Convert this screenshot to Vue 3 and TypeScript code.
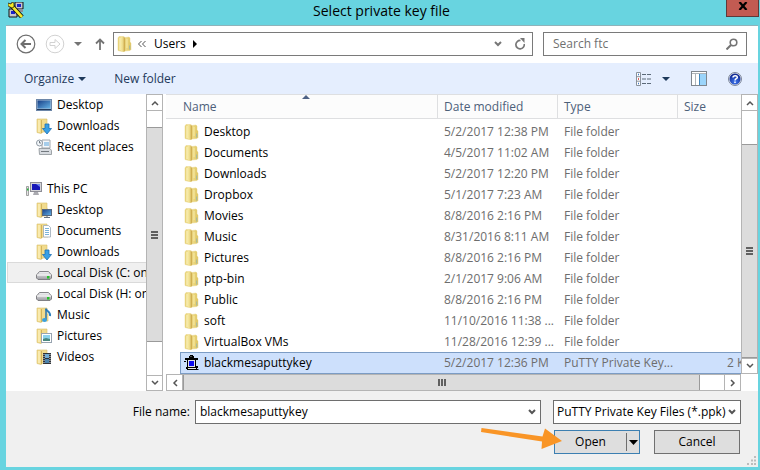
<script setup lang="ts">
import { ref } from 'vue'

interface NavItem {
  label: string
  icon: string
  root?: boolean
  spaced?: boolean
}

interface Entry {
  name: string
  modified: string
  type: string
  size: string
  icon: string
}

const places: NavItem[] = [
  { label: 'Desktop', icon: 'screen' },
  { label: 'Downloads', icon: 'downloads' },
  { label: 'Recent places', icon: 'recent' },
  { label: 'This PC', icon: 'pc', root: true, spaced: true },
  { label: 'Desktop', icon: 'desktop' },
  { label: 'Documents', icon: 'documents' },
  { label: 'Downloads', icon: 'downloads' },
  { label: 'Local Disk (C: on', icon: 'disk' },
  { label: 'Local Disk (H: on', icon: 'disk' },
  { label: 'Music', icon: 'music' },
  { label: 'Pictures', icon: 'pictures' },
  { label: 'Videos', icon: 'videos' },
  { label: '', icon: 'network', root: true, spaced: true },
]

const folder = (name: string, modified: string): Entry => ({
  name,
  modified,
  type: 'File folder',
  size: '',
  icon: 'folder',
})

const entries: Entry[] = [
  folder('Desktop', '5/2/2017 12:38 PM'),
  folder('Documents', '4/5/2017 11:02 AM'),
  folder('Downloads', '5/2/2017 12:20 PM'),
  folder('Dropbox', '5/1/2017 7:23 AM'),
  folder('Movies', '8/8/2016 2:16 PM'),
  folder('Music', '8/31/2016 8:11 AM'),
  folder('Pictures', '8/8/2016 2:16 PM'),
  folder('ptp-bin', '2/1/2017 9:06 AM'),
  folder('Public', '8/8/2016 2:16 PM'),
  folder('soft', '11/10/2016 11:38 ...'),
  folder('VirtualBox VMs', '11/28/2016 12:39 ...'),
  { name: 'blackmesaputtykey', modified: '5/2/2017 12:36 PM', type: 'PuTTY Private Key...', size: '2 KB', icon: 'key' },
]

const currentPlace = ref(7)
const selected = ref(11)
const fileName = ref('blackmesaputtykey')
const search = ref('')

function pick(index: number) {
  selected.value = index
  fileName.value = entries[index].name
}
</script>

<template>
  <svg class="defs" width="0" height="0" aria-hidden="true">
    <defs>
      <linearGradient id="fold" x1="0" y1="0" x2="1" y2="0">
        <stop offset="0" stop-color="#e6cf70" />
        <stop offset=".3" stop-color="#f5e79c" />
        <stop offset=".5" stop-color="#d2b254" />
        <stop offset=".6" stop-color="#efdc88" />
        <stop offset="1" stop-color="#dcc25c" />
      </linearGradient>
      <linearGradient id="blue" x1="0" y1="0" x2="1" y2="1">
        <stop offset="0" stop-color="#183f86" />
        <stop offset="1" stop-color="#66b4e8" />
      </linearGradient>
      <linearGradient id="metal" x1="0" y1="0" x2="0" y2="1">
        <stop offset="0" stop-color="#f4f4f6" />
        <stop offset="1" stop-color="#9c9ca2" />
      </linearGradient>
      <radialGradient id="ball" cx=".5" cy=".75" r=".7">
        <stop offset="0" stop-color="#3f78f0" />
        <stop offset="1" stop-color="#10268e" />
      </radialGradient>
      <symbol id="folder" viewBox="0 0 16 16">
        <path d="M1 2l1-1.500h4.500L8 1.500l4-.5 1 1v4l1 1v6.500L13 14.500l-5 .5-1 1-2-.5-4-1z" fill="url(#fold)" stroke="#e8d588" stroke-width=".5" />
        <path d="M7.500 2v13" stroke="#cfae50" stroke-width=".8" />
        <path d="M3 2v12" stroke="#fbf3c4" />
        <path d="M10 3v9" stroke="#f7eaa6" />
        <path d="M12.700 9.500v4" stroke="#9db8a8" />
      </symbol>
      <symbol id="halffolder" viewBox="0 0 16 16">
        <path d="M1 1h10v6h1v7H7l-2 1.500-4-1z" fill="#f1db8d" stroke="#d9bf68" stroke-width=".6" />
        <path d="M5.500 2v13" stroke="#c9a94f" stroke-width=".8" />
        <path d="M3 2v12" stroke="#fbefba" stroke-width="1.500" />
      </symbol>
      <symbol id="screen" viewBox="0 0 16 16">
        <rect x=".5" y="2.500" width="15" height="11" fill="#a8bdd4" stroke="#6c86a8" />
        <rect x="1.500" y="3.500" width="13" height="8" fill="url(#blue)" />
        <path d="M1 12.500h14" stroke="#223a5c" />
      </symbol>
      <symbol id="downloads" viewBox="0 0 16 16">
        <use href="#halffolder" />
        <path d="M9 6h4v4.500h2.500L11 16 6.500 10.500H9z" fill="#38a0e6" stroke="#1d70b4" stroke-width=".8" />
      </symbol>
      <symbol id="recent" viewBox="0 0 16 16">
        <path d="M6 1h8v8H6z" fill="#f6f8fa" stroke="#a2a8ae" />
        <path d="M8 4h5M8 6h5" stroke="#56a3dc" />
        <path d="M3 9.500h11l1.500 2v4H3.500z" fill="#d7dbe0" stroke="#8a9096" stroke-width=".8" />
        <path d="M5 12.500h8" stroke="#73797f" />
        <circle cx="3.500" cy="4" r="3" fill="#f3f7fa" stroke="#8f99a3" />
        <path d="M3.500 2v2H5" fill="none" stroke="#55606a" stroke-width=".8" />
      </symbol>
      <symbol id="pc" viewBox="0 0 16 16">
        <rect x="4.500" y="1.500" width="11" height="9" fill="#d4d4d8" stroke="#8e8e96" />
        <rect x="6" y="3" width="8" height="6" fill="#1717b8" />
        <path d="M10 3h4v3z" fill="#6f84f0" />
        <path d="M8 11h4l1 3H7z" fill="#aaaab0" />
        <path d="M.5 5.500h2v9h-2z" fill="#e5e5e5" stroke="#8b8b8b" stroke-width=".8" />
        <path d="M1 8.500h1.500" stroke="#25b33a" stroke-width="2" />
      </symbol>
      <symbol id="desktop" viewBox="0 0 16 16">
        <use href="#halffolder" />
        <rect x="6.500" y="7.500" width="9" height="6" fill="url(#blue)" stroke="#56677d" />
        <path d="M8 15.500h6M11 14v1" stroke="#65717f" />
      </symbol>
      <symbol id="documents" viewBox="0 0 16 16">
        <use href="#halffolder" />
        <path d="M7.500 2.500h5l2 2v9.500h-7z" fill="#fff" stroke="#9aa8b6" stroke-width=".8" />
        <path d="M9 5.500h4M9 7.500h4M9 9.500h4M9 11.500h4" stroke="#6babd6" stroke-width=".9" />
      </symbol>
      <symbol id="disk" viewBox="0 0 16 16">
        <path d="M3.500 6.500h9l3 3.500v3l-1.500 1.500H2L.5 13v-3z" fill="url(#metal)" stroke="#77777c" stroke-width=".9" />
        <path d="M1 10h14" stroke="#fff" />
        <rect x="11" y="11" width="2.500" height="2.500" fill="#26c12a" />
      </symbol>
      <symbol id="music" viewBox="0 0 16 16">
        <use href="#halffolder" />
        <path d="M10 1.500c0 3 5 3 4 7.500" fill="none" stroke="#2f80bd" stroke-width="2" />
        <path d="M10 2v11" stroke="#2673b2" stroke-width="1.500" />
        <ellipse cx="8.500" cy="13" rx="2.500" ry="2" fill="#39a0dd" />
      </symbol>
      <symbol id="pictures" viewBox="0 0 16 16">
        <use href="#halffolder" />
        <rect x="5.500" y="5.500" width="10" height="9" fill="#fff" stroke="#98a4b0" />
        <rect x="7" y="7" width="7" height="6" fill="#8bd2ed" />
        <path d="M7 11l3-1 4 1v2H7z" fill="#4a897f" />
      </symbol>
      <symbol id="videos" viewBox="0 0 16 16">
        <use href="#halffolder" />
        <rect x="7" y="4" width="8" height="11" fill="#2f3338" />
        <rect x="9" y="5" width="4" height="4" fill="#70abd4" />
        <rect x="9" y="10" width="4" height="4" fill="#4b82ac" />
        <path d="M8 5v10M14 5v10" stroke="#e3e6e8" stroke-dasharray="1 1" />
      </symbol>
      <symbol id="network" viewBox="0 0 16 16">
        <path d="M4 .500h4" stroke="#3c6c9c" />
        <path d="M3 1.500h6" stroke="#5c8cb4" />
        <rect x="5" y="5" width="9" height="7" fill="#3d70b0" />
      </symbol>
      <symbol id="key" viewBox="0 0 16 16">
        <path d="M6 0h3v1h1v2h4v2h-2v6h2v2h-1v2H3v-1H2v-2h1V5H1V3h4V1h1z" fill="#000" />
        <path d="M4 5h7v7H4z" fill="#e2e2e8" />
        <path d="M5 6h5v5H5z" fill="#0b0bf0" />
        <path d="M4 13.500h8" stroke="#e8e8e8" />
        <path d="M6.500 1.500h1" stroke="#9a9a9a" />
        <path d="M0 6.500h2M12.500 14.500h2" stroke="#000" />
      </symbol>
      <symbol id="chevron" viewBox="0 0 8 8">
        <path d="M1 2l3 3 3-3" fill="none" stroke="currentColor" stroke-width="2" />
      </symbol>
      <symbol id="thin" viewBox="0 0 8 8">
        <path d="M1 2l3 3 3-3" fill="none" stroke="currentColor" stroke-width="1.500" />
      </symbol>
    </defs>
  </svg>

  <main class="dialog">
    <header class="titlebar">
      <svg class="app" viewBox="0 0 16 16" width="16" height="16" aria-hidden="true">
        <path d="M7 0h8v7H7zM1 7h8v8H1z" fill="#c6c6ce" stroke="#111" />
        <path d="M9 2h4v3H9zM3 9h4v3H3z" fill="#1a22c8" />
        <path d="M9 7h6v3H9zM1 1h4v5H1z" fill="#8f8f98" />
        <path d="M3 3l11 12" stroke="#111" stroke-width="4.500" />
        <path d="M3 3l11 12" stroke="#f5ea28" stroke-width="2.600" />
        <path d="M0 1l3 1 1-2 2 1v4L4 6 0 4z" fill="#f5ea28" stroke="#111" stroke-width=".7" />
      </svg>
      <h1>Select private key file</h1>
      <button class="close" type="button" aria-label="Close">
        <svg viewBox="0 0 10 8" width="10" height="8"><path d="M1.500 0l7 8M8.500 0l-7 8" stroke="#000" stroke-width="2.200" /></svg>
      </button>
    </header>

    <section class="body">
      <nav class="address" aria-label="Address">
        <div class="history">
          <button type="button" aria-label="Back">
            <svg viewBox="0 0 20 20" width="20" height="20" fill="none" stroke="#6e6e6e">
              <circle cx="10" cy="10" r="8.800" stroke-width="1.200" />
              <path d="M15 10H6M9.500 6L5.500 10l4 4" stroke-width="2" />
            </svg>
          </button>
          <button type="button" aria-label="Forward">
            <svg viewBox="0 0 20 20" width="20" height="20" fill="none" stroke="#d2d2d2">
              <circle cx="10" cy="10" r="8.800" />
              <path d="M5 8.500h5V5.500l5 4.500-5 4.500v-3H5z" />
            </svg>
          </button>
          <button type="button" aria-label="Recent locations">
            <svg viewBox="0 0 8 4" width="8" height="4"><path d="M0 0h8L4 4z" fill="#747474" /></svg>
          </button>
          <button class="up" type="button" aria-label="Up">
            <svg viewBox="0 0 10 12" width="10" height="12"><path d="M5 12V2M1 5.500l4-4 4 4" fill="none" stroke="#747474" stroke-width="1.800" /></svg>
          </button>
        </div>
        <div class="path">
          <svg class="icon" width="16" height="16" aria-hidden="true"><use href="#folder" /></svg>
          <button class="more" type="button" aria-label="More folders">
            <svg viewBox="0 0 8 6" width="8" height="6"><path d="M3.500 0l-3 3 3 3M7.500 0l-3 3 3 3" fill="none" stroke="#555" /></svg>
          </button>
          <button class="crumb" type="button">Users</button>
          <button class="crumb-arrow" type="button" aria-label="Subfolders of Users">
            <svg viewBox="0 0 4 8" width="4" height="8"><path d="M0 0v8l4-4z" fill="#000" /></svg>
          </button>
          <button class="drop" type="button" aria-label="Previous locations">
            <svg width="8" height="8"><use href="#chevron" /></svg>
          </button>
          <button class="refresh" type="button" aria-label="Refresh">
            <svg viewBox="0 0 12 12" width="12" height="12"><path d="M10.200 6A4.200 4.200 0 1 1 6.500 2.500" fill="none" stroke="#777" stroke-width="1.700" /><path d="M6 0h4.500v5z" fill="#777" /></svg>
          </button>
        </div>
        <label class="search">
          <input v-model="search" type="text" placeholder="Search ftc" aria-label="Search ftc" />
          <svg viewBox="0 0 12 12" width="12" height="12" fill="none" stroke="#747474"><circle cx="7.500" cy="4.500" r="3.300" stroke-width="1.600" /><path d="M5 7l-4.500 4.500" stroke-width="2" /></svg>
        </label>
      </nav>

      <div class="toolbar">
        <button type="button">Organize <svg viewBox="0 0 8 4" width="8" height="4"><path d="M0 0h8L4 4z" fill="#1e395b" /></svg></button>
        <button type="button">New folder</button>
        <div class="tools">
          <button type="button" aria-label="Change view">
            <svg viewBox="0 0 16 14" width="16" height="14">
              <path d="M.5.5h4v13h-4zM0 4.700h5M0 9.200h5" fill="#fff" stroke="#8a929c" />
              <path d="M2 2.500h1M2 11.500h1" stroke="#3d79c8" stroke-width="1.500" /><path d="M2 7h1" stroke="#d12626" stroke-width="1.500" />
              <path d="M6 2.500h4M11 2.500h4M6 7h4M11 7h4M6 11.500h4M11 11.500h4" stroke="#5c6a79" />
            </svg>
          </button>
          <button type="button" aria-label="View options"><svg viewBox="0 0 8 4" width="8" height="4"><path d="M0 0h8L4 4z" fill="#1e395b" /></svg></button>
          <button class="pane" type="button" aria-label="Preview pane">
            <svg viewBox="0 0 16 15" width="16" height="15">
              <rect x=".5" y=".5" width="15" height="14" fill="#fff" stroke="#7f868e" />
              <path d="M1 2.500h14M4.500 3v11" stroke="#adb3b9" /><rect x="9" y="3" width="6" height="11" fill="#9bd4fa" /><path d="M8.500 3v11" stroke="#3e86bd" />
            </svg>
          </button>
          <button class="help" type="button" aria-label="Help">
            <svg viewBox="0 0 14 14" width="14" height="14">
              <circle cx="7" cy="7" r="6.500" fill="#dfe5f0" stroke="#7c8699" /><circle cx="7" cy="7" r="5.500" fill="url(#ball)" />
              <path d="M5 5.500C5 3 9.500 3 9.300 5.500 9.200 6.800 7.200 6.700 7 8.500M7 9.500V11" fill="none" stroke="#fff" stroke-width="1.500" />
            </svg>
          </button>
        </div>
      </div>

      <div class="browser">
        <aside class="sidebar">
          <ul>
            <li v-for="(place, i) in places" :key="i" :class="{ spaced: place.spaced }">
              <button type="button" :class="{ root: place.root, current: i === currentPlace }" @click="currentPlace = i">
                <svg class="icon" width="16" height="16" aria-hidden="true"><use :href="`#${place.icon}`" /></svg>
                <span>{{ place.label }}</span>
              </button>
            </li>
          </ul>
          <div class="vscroll">
            <button type="button" aria-label="Scroll up"><svg class="flip" width="8" height="8"><use href="#thin" /></svg></button>
            <div class="track">
              <div class="thumb side"><i></i><i></i><i></i></div>
            </div>
            <button type="button" aria-label="Scroll down"><svg width="8" height="8"><use href="#thin" /></svg></button>
          </div>
        </aside>

        <div class="files">
          <div class="listing">
            <div class="view">
              <table>
                <colgroup>
                  <col class="c-gutter" /><col /><col class="c-mid" /><col class="c-mid" /><col class="c-size" />
                </colgroup>
                <thead>
                  <tr>
                    <th colspan="2" class="name-head">
                      Name
                      <svg class="sort" viewBox="0 0 8 4" width="8" height="4" aria-hidden="true"><path d="M0 4h8L4 0z" fill="#4d6185" /></svg>
                    </th>
                    <th>Date modified</th>
                    <th>Type</th>
                    <th>Size</th>
                  </tr>
                </thead>
                <tbody>
                  <tr v-for="(entry, i) in entries" :key="entry.name" :class="{ selected: i === selected }" @click="pick(i)">
                    <td class="gutter"></td>
                    <td class="name">
                      <div><svg class="icon" width="16" height="16" aria-hidden="true"><use :href="`#${entry.icon}`" /></svg>{{ entry.name }}</div>
                    </td>
                    <td>{{ entry.modified }}</td>
                    <td>{{ entry.type }}</td>
                    <td class="size">{{ entry.size }}</td>
                  </tr>
                </tbody>
              </table>
            </div>
            <div class="vscroll">
              <button type="button" aria-label="Scroll up"><svg class="flip" width="8" height="8"><use href="#thin" /></svg></button>
              <div class="track">
                <div class="thumb list"><i></i><i></i><i></i></div>
              </div>
              <button type="button" aria-label="Scroll down"><svg width="8" height="8"><use href="#thin" /></svg></button>
            </div>
          </div>
          <div class="hscroll">
            <button type="button" aria-label="Scroll left"><svg class="left" width="8" height="8"><use href="#thin" /></svg></button>
            <div class="track">
              <div class="thumb"><i></i><i></i><i></i></div>
            </div>
            <button type="button" aria-label="Scroll right"><svg class="right" width="8" height="8"><use href="#thin" /></svg></button>
          </div>
        </div>
      </div>

      <footer class="footer">
        <div class="row">
          <label for="file-name">File name:</label>
          <div class="combo">
            <input id="file-name" v-model="fileName" type="text" />
            <button type="button" aria-label="Recent file names"><svg width="8" height="8"><use href="#chevron" /></svg></button>
          </div>
          <div class="combo filter">
            <select aria-label="File type">
              <option>PuTTY Private Key Files (*.ppk)</option>
              <option>All Files (*.*)</option>
            </select>
            <svg width="8" height="8" aria-hidden="true"><use href="#chevron" /></svg>
          </div>
        </div>
        <div class="row actions">
          <div class="split">
            <button type="button">Open</button>
            <button class="open-menu" type="button" aria-label="Open options">
              <svg viewBox="0 0 9 5" width="9" height="5"><path d="M0 0h9L4.500 5z" fill="#000" /></svg>
            </button>
            <svg class="pointer" viewBox="0 0 82 22" width="82" height="22" aria-hidden="true">
              <path d="M.5 0L61.500 8.500 64 .5 81 13 60.500 21 61 13.500 0 4z" fill="#f99526" />
            </svg>
          </div>
          <button class="cancel" type="button">Cancel</button>
        </div>
        <svg class="grip" viewBox="0 0 9 9" width="9" height="9" aria-hidden="true">
          <path d="M7 0h2v2H7zM4 3.500h2v2H4zM7 3.500h2v2H7zM0 7h2v2H0zM4 7h2v2H4zM7 7h2v2H7z" fill="#bcbcbc" />
        </svg>
      </footer>
    </section>
  </main>
</template>

<style>
body {
  margin: 0;
}
</style>

<style scoped>
* {
  box-sizing: border-box;
}

.defs {
  display: block;
}

.dialog {
  display: flex;
  flex-direction: column;
  height: 100vh;
  background: #68d4e0;
  color: #000;
  font: 12px/16px "Open Sans", "Noto Sans", sans-serif;
}

button,
input,
select {
  margin: 0;
  padding: 0;
  border: 0;
  border-radius: 0;
  outline: 0;
  background: none;
  color: inherit;
  font: inherit;
}

svg {
  flex: none;
}

.titlebar {
  display: grid;
  grid-template-columns: 33px 1fr 33px;
  align-items: start;
  height: 25px;
  padding: 0 1px 0 8px;
}

.titlebar .app {
  margin-top: 2px;
}

h1 {
  margin: 0;
  padding-right: 4px;
  font-size: 14px;
  line-height: 22px;
  font-weight: 400;
  text-align: center;
}

.close {
  display: grid;
  place-items: center;
  height: 17px;
  padding-bottom: 4px;
  border: 1px solid #5e3a3a;
  border-top: 0;
  background: #c25b52;
}

.body {
  display: flex;
  flex: 1;
  flex-direction: column;
  min-height: 0;
  margin: 0 2px 3px 6px;
  border-top: 1px solid #8fb3ba;
  background: #fff;
}

.address {
  display: flex;
  padding: 6px 11px 7px 10px;
}

.history {
  display: flex;
  align-items: center;
  width: 97px;
  gap: 9px;
}

.history button {
  display: flex;
}

.history .up {
  margin-left: 4px;
}

.path {
  display: flex;
  flex: 1;
  align-items: center;
  border: 1px solid #7a7a7a;
  padding-left: 3px;
}

.path button {
  display: flex;
  align-items: center;
}

.path .more {
  margin: 0 8px 0 5px;
}

.path .crumb {
  margin-right: 7px;
}

.path .drop {
  margin-left: auto;
  color: #777;
}

.path .refresh {
  align-self: stretch;
  justify-content: center;
  width: 24px;
  margin-left: 6px;
}

.search {
  display: flex;
  align-items: center;
  width: 204px;
  height: 24px;
  margin-left: 10px;
  padding: 0 8px 0 9px;
  border: 1px solid #7a7a7a;
}

.search input {
  flex: 1;
  min-width: 0;
}

.search input::placeholder {
  color: #707070;
  opacity: 1;
}

.toolbar {
  display: flex;
  align-items: center;
  gap: 28px;
  height: 31px;
  flex: none;
  padding: 0 16px 0 18px;
  background: #e5eefe;
  color: #1e395b;
}

.toolbar button {
  display: flex;
  align-items: center;
  gap: 4px;
}

.tools {
  display: flex;
  align-items: center;
  gap: 10px;
  margin-left: auto;
}

.tools .pane,
.tools .help {
  margin-left: 11px;
}

.browser {
  display: flex;
  flex: 1;
  gap: 3px;
  min-height: 0;
}

.sidebar {
  display: flex;
  width: 157px;
  overflow: hidden;
}

.sidebar ul {
  flex: 1;
  min-width: 0;
  margin: 0;
  padding: 0 0 0 1px;
  overflow: hidden;
  list-style: none;
}

.sidebar li.spaced {
  margin-top: 21px;
}

.sidebar li button {
  display: flex;
  align-items: center;
  gap: 5px;
  width: 100%;
  height: 21px;
  padding-left: 28px;
  border: 1px solid transparent;
  border-right: 0;
  white-space: nowrap;
}

.sidebar li button.root {
  padding-left: 18px;
}

.sidebar li button.current {
  border-color: #dadada;
  background: #f0f0f0;
}

.vscroll {
  display: flex;
  flex: none;
  flex-direction: column;
  width: 17px;
  border: solid #b4b4b4;
  border-width: 1px 1px 0;
  color: #555;
}

.vscroll button,
.hscroll button {
  display: grid;
  flex: none;
  place-items: center;
  width: 15px;
  height: 16px;
  border: 0 solid #b4b4b4;
}

.vscroll button {
  border-width: 0 0 1px;
}

.vscroll button:last-child {
  border-width: 1px 0;
}

.flip {
  transform: rotate(180deg);
}

.left {
  transform: rotate(90deg);
}

.right {
  transform: rotate(-90deg);
}

.track {
  display: flex;
  flex: 1;
  min-height: 0;
}

.vscroll .track {
  flex-direction: column;
}

.thumb {
  display: flex;
  align-items: center;
  justify-content: center;
  gap: 1px;
  background: #dcdcdc;
  border: 0 solid #9a9a9a;
}

.vscroll .thumb {
  flex-direction: column;
  border-width: 1px 0;
}

.thumb i {
  background: #606060;
}

.vscroll .thumb i {
  width: 7px;
  height: 2px;
}

.thumb.side {
  flex: 1;
  margin: 16px 0 33px;
}

.thumb.list {
  flex: 1;
  margin-top: 33px;
}

.files {
  display: flex;
  flex: 1;
  flex-direction: column;
  min-width: 0;
}

.listing {
  display: flex;
  flex: 1;
  min-height: 0;
}

.view {
  flex: 1;
  min-width: 0;
  overflow: hidden;
}

table {
  width: calc(100% + 20px);
  border-collapse: separate;
  border-spacing: 0;
  table-layout: fixed;
}

.c-gutter {
  width: 14px;
}

.c-mid {
  width: 120px;
}

.c-size {
  width: 84px;
}

th {
  height: 25px;
  padding: 0 0 0 6px;
  border: solid #dedfe1;
  border-width: 1px 0 1px 1px;
  background: #fcfcfc;
  color: #4c607a;
  font-weight: 400;
  text-align: left;
}

.name-head {
  position: relative;
  padding-left: 17px;
  border-left: 0;
}

.sort {
  position: absolute;
  top: 0;
  left: 50%;
}

tbody::before {
  display: block;
  height: 2px;
  content: "";
}

td {
  height: 21px;
  padding: 0 0 0 7px;
  overflow: hidden;
  color: #6d6d6d;
  white-space: nowrap;
}

td.gutter {
  padding: 0;
}

td.name {
  padding-left: 4px;
  color: #000;
}

td.name div {
  display: flex;
  align-items: center;
  gap: 4px;
}

td.size {
  padding-right: 9px;
  text-align: right;
}

.selected td:not(.gutter) {
  height: 22px;
  border: solid #7c9cc4;
  border-width: 1px 0;
  background: #cde0fc;
}

.selected td.name {
  padding-left: 3px;
  border-left-width: 1px;
}

.hscroll {
  display: flex;
  flex: none;
  height: 17px;
  margin-right: 17px;
  border: 1px solid #b4b4b4;
  color: #555;
}

.hscroll button {
  width: 16px;
  height: 15px;
  border-width: 0 1px 0 0;
}

.hscroll button:last-child {
  border-width: 0 0 0 1px;
}

.hscroll .thumb {
  flex: 1;
  margin-right: 24px;
  border-width: 0 1px;
}

.hscroll .thumb i {
  width: 2px;
  height: 7px;
}

.footer {
  position: relative;
  display: flex;
  flex: none;
  flex-direction: column;
  gap: 6px;
  padding: 9px 17px 13px 20px;
  background: #f0f0f0;
}

.row {
  display: flex;
  align-items: center;
}

.row label {
  width: 169px;
  padding-right: 5px;
  text-align: right;
}

.combo {
  display: flex;
  flex: 1;
  align-items: center;
  height: 24px;
  min-width: 0;
  padding: 0 4px;
  border: 1px solid #6e6e6e;
  background: #fff;
  color: #555;
}

.combo input,
.combo select {
  flex: 1;
  min-width: 0;
  color: #000;
}

.combo button {
  display: flex;
}

.combo.filter {
  flex: none;
  width: 188px;
  margin-left: 12px;
  padding-left: 3px;
}

select {
  appearance: none;
}

.actions {
  justify-content: flex-end;
  gap: 14px;
  padding-right: 1px;
}

.split {
  position: relative;
  display: flex;
  width: 86px;
  height: 24px;
  border: 1px solid #3c7fb1;
  background: #dedede;
}

.split button:first-child {
  flex: 1;
}

.open-menu {
  display: grid;
  place-items: center;
  width: 13px;
  margin: 2px 0;
  border-left: 1px solid #6e6e6e;
}

.pointer {
  position: absolute;
  top: -3px;
  right: 76px;
}

.cancel {
  width: 86px;
  height: 24px;
  border: 1px solid #707070;
  background: #dedede;
}

.grip {
  position: absolute;
  right: 2px;
  bottom: 2px;
}
</style>
